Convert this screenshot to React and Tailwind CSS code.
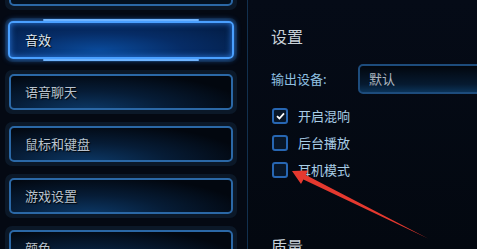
const font = { fontFamily: '"Noto Sans CJK SC", "Noto Sans", sans-serif' };

function NavButton({ label, active }) {
  if (active) {
    return (
      <div className="relative h-[44px] w-[232px] shrink-0 rounded-[7px] bg-[#0b1a2c] p-[3px]">
        <div className="absolute left-[38px] right-[38px] top-[1px] h-[2px] rounded-full bg-[#6fb4ff]" />
        <div className="absolute bottom-[1px] left-[38px] right-[38px] h-[2px] rounded-full bg-[#6fb4ff]" />
        <div className="flex h-full items-center rounded-[5px] border-2 border-[#4aa0ff] bg-[radial-gradient(ellipse_at_40%_80%,#0a4a9a_0%,#062c66_45%,#031a3e_100%)] pl-[15px] shadow-[0_0_6px_#2f7fe8,inset_0_0_6px_#2a7ae0]">
          <span className="text-[13px] text-[#dfe6ee] [text-shadow:1px_1px_1px_#000]">{label}</span>
        </div>
      </div>
    );
  }
  return (
    <div className="h-[44px] w-[232px] shrink-0 rounded-[7px] bg-[#0b1828] p-[4px]">
      <div className="flex h-full items-center rounded-[5px] border-2 border-[#2b68a6] bg-[radial-gradient(ellipse_at_35%_110%,#0c3968_0%,#061c36_40%,#02070f_80%)] pl-[14px]">
        <span className="text-[13px] text-[#b9c3cd] [text-shadow:1px_1px_1px_#000]">{label}</span>
      </div>
    </div>
  );
}

function Check({ label, checked }) {
  return (
    <div className="flex h-[16px] items-center">
      <div className="flex h-[16px] w-[16px] items-center justify-center rounded-[3px] border-2 border-[#2766b2] bg-[#081628]">
        {checked && (
          <svg width="9" height="8" viewBox="0 0 9 8">
            <path d="M1 4.2 L3.4 6.5 L8 1.3" stroke="#ffffff" strokeWidth="1.8" fill="none" />
          </svg>
        )}
      </div>
      <span className="ml-[10px] text-[13px] text-[#a9cde6]">{label}</span>
    </div>
  );
}

export default function App() {
  return (
    <div className="relative flex h-[249px] w-[477px] overflow-hidden bg-[#040913]" style={font}>
      <div className="flex w-[247px] shrink-0 flex-col gap-[8px] pl-[5px] pt-0">
        <div className="-mt-[34px] h-[44px] w-[232px] shrink-0 rounded-[7px] bg-[#0b1828] p-[4px]">
          <div className="h-full rounded-[5px] border-2 border-[#2b68a6] bg-[#03101f]" />
        </div>
        <NavButton label="音效" active />
        <NavButton label="语音聊天" />
        <NavButton label="鼠标和键盘" />
        <NavButton label="游戏设置" />
        <NavButton label="颜色" />
      </div>
      <div className="h-full w-[1px] bg-[#12304e]" />
      <div className="flex flex-1 flex-col bg-[linear-gradient(180deg,#050b17_0%,#030810_100%)] pl-[23px]">
        <div className="mt-[25px] text-[16px] leading-[22px] text-[#c9d1d9]">设置</div>
        <div className="mt-[17px] flex items-center">
          <span className="w-[87px] text-[13px] text-[#8fc0e0]">输出设备:</span>
          <div className="-mr-[10px] flex h-[30px] flex-1 items-center rounded-[5px] border-2 border-[#1d4c7c] bg-[linear-gradient(180deg,#02070e_0%,#061a30_70%,#0b3358_100%)] pl-[9px]">
            <span className="text-[13px] text-[#aeb7c0]">默认</span>
          </div>
        </div>
        <div className="mt-[14px] flex flex-col gap-[11px] pl-[1px]">
          <Check label="开启混响" checked />
          <Check label="后台播放" />
          <Check label="耳机模式" />
        </div>
        <div className="mt-[57px] text-[16px] leading-[22px] text-[#c9d1d9]">质量</div>
      </div>
      <svg className="pointer-events-none absolute left-0 top-0" width="477" height="249">
        <polygon
          points="292,171 308,170.5 305.8,175 428,238.5 303.4,179.6 301,184"
          fill="#e5392f"
        />
      </svg>
    </div>
  );
}
